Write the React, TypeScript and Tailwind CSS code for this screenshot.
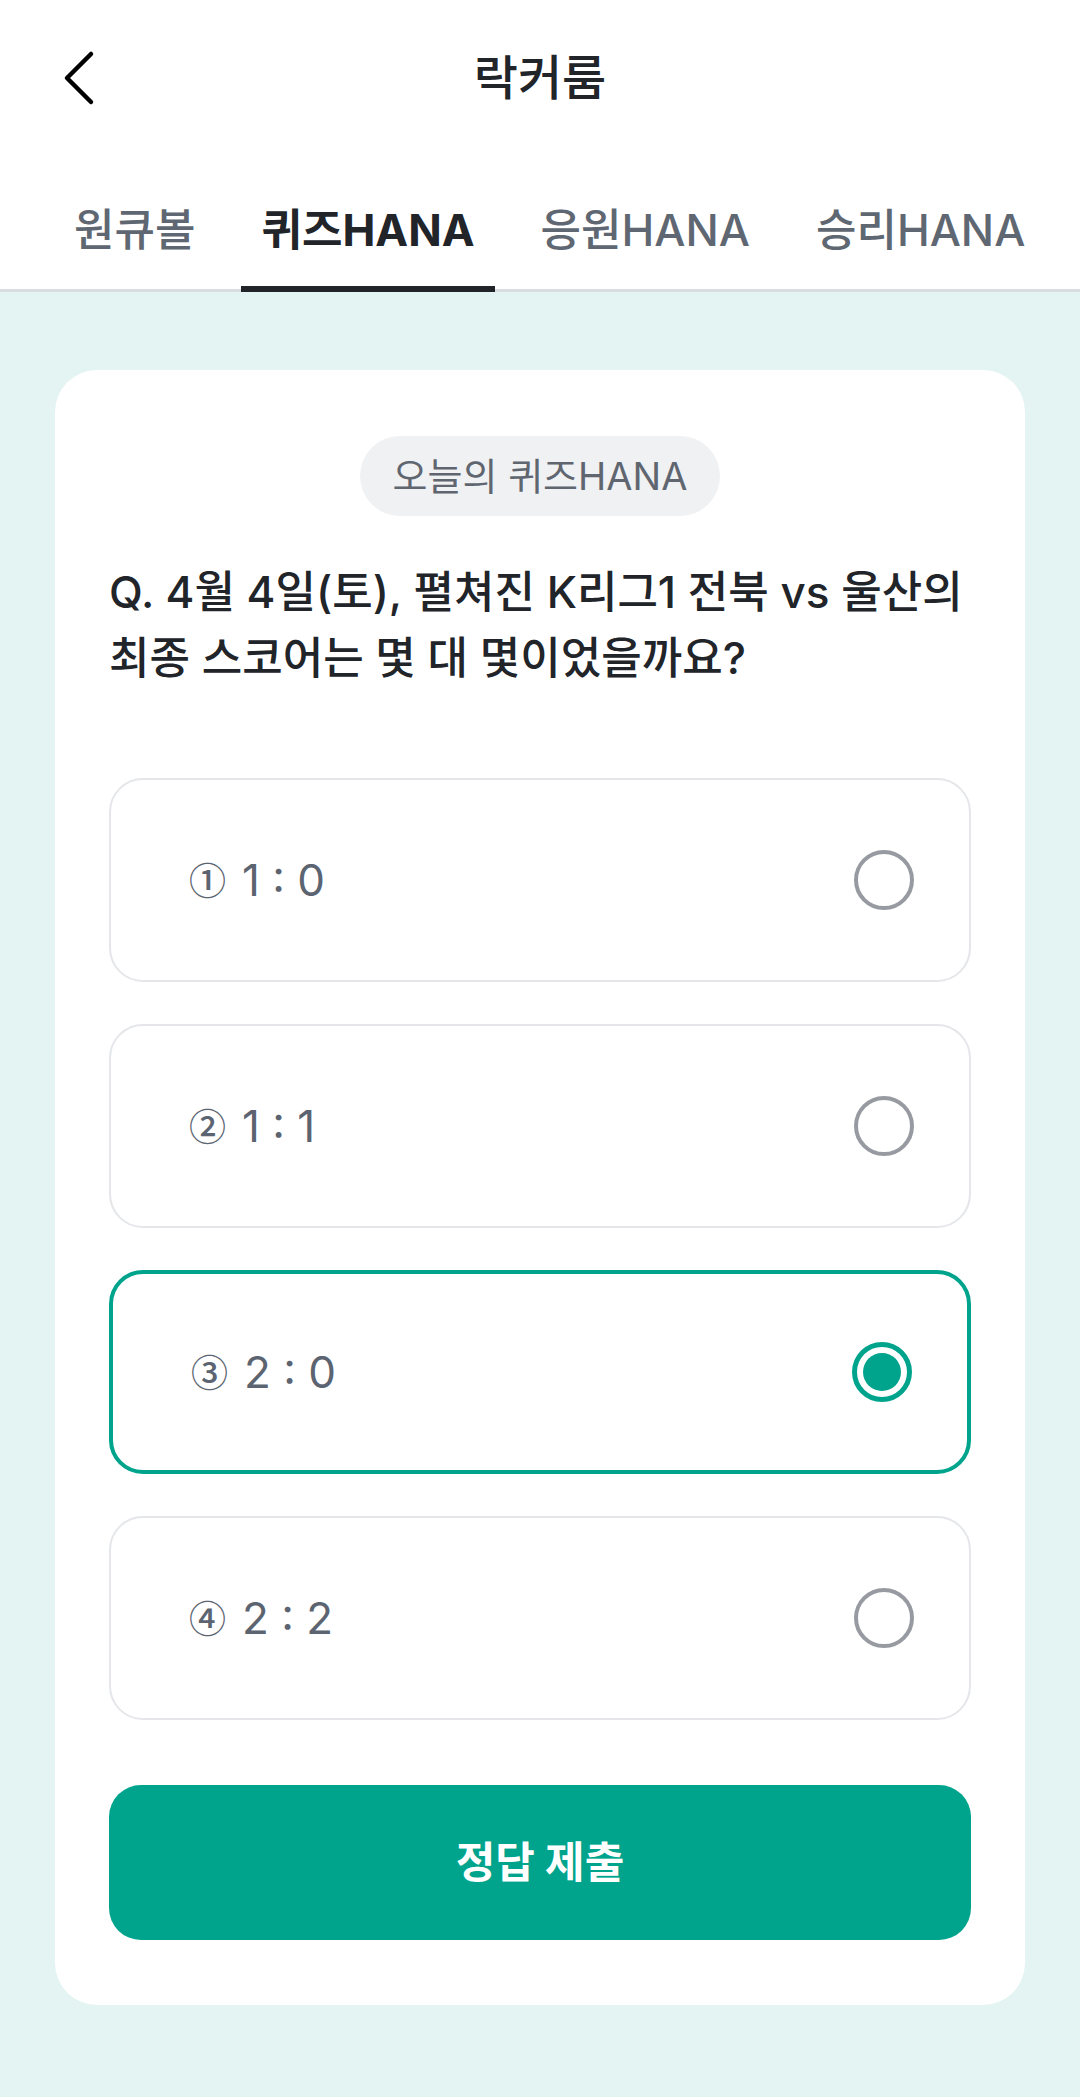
import { useState } from "react";

const tabs = ["원큐볼", "퀴즈HANA", "응원HANA", "승리HANA"];

const options = [
  { id: 1, mark: "①", label: "1 : 0" },
  { id: 2, mark: "②", label: "1 : 1" },
  { id: 3, mark: "③", label: "2 : 0" },
  { id: 4, mark: "④", label: "2 : 2" },
];

function Radio({ checked }: { checked: boolean }) {
  if (checked) {
    return (
      <span className="flex h-[60px] w-[60px] items-center justify-center rounded-full border-[5px] border-[#00a38c]">
        <span className="h-[38px] w-[38px] rounded-full bg-[#00a38c]" />
      </span>
    );
  }
  return <span className="h-[60px] w-[60px] rounded-full border-[4px] border-[#979ba1]" />;
}

export default function App() {
  const [activeTab, setActiveTab] = useState(1);
  const [selected, setSelected] = useState(3);

  return (
    <div
      className="min-h-[2097px] w-[1080px] bg-[#e4f4f2]"
      style={{ fontFamily: 'Inter, "Noto Sans CJK KR", sans-serif' }}
    >
      <header className="bg-white">
        <div className="grid h-[156px] grid-cols-[1fr_auto_1fr] items-center">
          <button className="pl-[62px]" aria-label="뒤로">
            <svg width="34" height="56" viewBox="0 0 34 56" fill="none">
              <path d="M29 4 L5 28 L29 52" stroke="#000" strokeWidth="4.5" strokeLinecap="round" strokeLinejoin="round" />
            </svg>
          </button>
          <h1 className="text-[48px] font-medium text-[#212429]">락커룸</h1>
          <div />
        </div>
        <nav className="flex items-end gap-[26px] border-b-[3px] border-[#d9dde0] pl-[54px]">
          {tabs.map((t, i) => (
            <button
              key={t}
              onClick={() => setActiveTab(i)}
              className={`-mb-[3px] border-b-[6px] px-[20px] pb-[26px] pt-[44px] text-[44px] leading-[60px] ${
                activeTab === i
                  ? "border-[#212429] font-bold text-[#212429]"
                  : "border-transparent font-medium text-[#5f6872]"
              }`}
            >
              {t}
            </button>
          ))}
        </nav>
      </header>

      <main className="px-[55px] pt-[78px]">
        <section className="rounded-[42px] bg-white px-[54px] pb-[65px] pt-[66px]">
          <div className="flex justify-center">
            <span className="flex h-[80px] items-center rounded-full bg-[#f0f1f3] px-[33px] text-[38px] text-[#5f6670]">
              오늘의 퀴즈HANA
            </span>
          </div>

          <p className="mt-[43px] text-[44px] font-medium leading-[66px] text-[#212429]">
            Q. 4월 4일(토), 펼쳐진 K리그1 전북 vs 울산의
            <br />
            최종 스코어는 몇 대 몇이었을까요?
          </p>

          <div className="mt-[87px] flex flex-col gap-[42px]">
            {options.map((o) => (
              <button
                key={o.id}
                onClick={() => setSelected(o.id)}
                className={`flex h-[204px] items-center justify-between rounded-[34px] bg-white pl-[78px] pr-[55px] ${
                  selected === o.id ? "border-[4px] border-[#00a38c]" : "border-2 border-[#e4e6e9]"
                }`}
              >
                <span className="flex items-center gap-[16px] text-[44px] text-[#5b6470]">
                  <span className="font-medium text-[37px]" style={{ fontFamily: '"Noto Sans CJK KR", sans-serif' }}>
                    {o.mark}
                  </span>
                  <span>{o.label}</span>
                </span>
                <Radio checked={selected === o.id} />
              </button>
            ))}
          </div>

          <button className="mt-[65px] flex h-[155px] w-full items-center justify-center rounded-[32px] bg-[#00a38c] text-[43px] font-bold text-white">
            정답 제출
          </button>
        </section>
      </main>
    </div>
  );
}
